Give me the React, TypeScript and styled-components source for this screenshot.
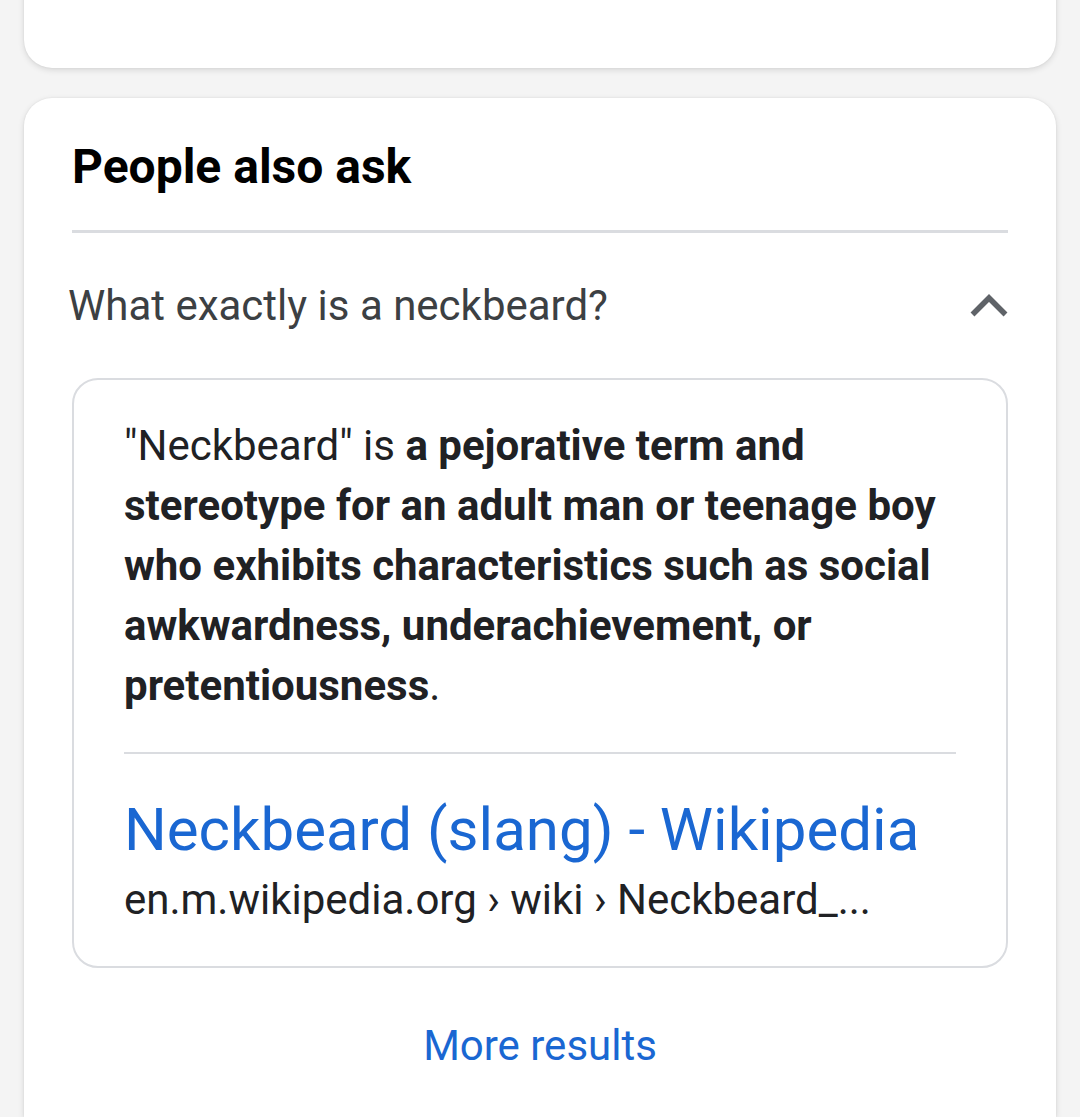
import React from "react";
import styled, { createGlobalStyle } from "styled-components";

const Global = createGlobalStyle`
  html, body { margin: 0; padding: 0; background: #f4f4f4; }
  body { font-family: Roboto, "Noto Sans", Arial, sans-serif; }
  * { box-sizing: border-box; }
`;

const Page = styled.div`
  display: flex;
  flex-direction: column;
  gap: 30px;
  padding: 0 24px;
  height: 1117px;
  overflow: hidden;
`;

const Card = styled.div<{ $top?: boolean }>`
  background: #fff;
  border-radius: 28px;
  box-shadow: 0 2px 6px rgba(0, 0, 0, 0.12), 0 0 2px rgba(0, 0, 0, 0.08);
  ${(p) =>
    p.$top
      ? `height: 96px; margin-top: -28px; border-top-left-radius: 0; border-top-right-radius: 0;`
      : `flex: 1; padding: 0 48px; border-bottom-left-radius: 0; border-bottom-right-radius: 0;`}
`;

const Heading = styled.h2`
  margin: 0;
  padding: 38px 0 32px;
  font-size: 48px;
  font-weight: 700;
  color: #000;
  line-height: 62px;
  border-bottom: 3px solid #dadce0;
`;

const QuestionRow = styled.div`
  display: flex;
  align-items: center;
  justify-content: space-between;
  height: 145px;
  margin-left: -4px;
`;

const Question = styled.span`
  font-size: 42px;
  color: #3c4043;
`;

const Chevron = styled.svg`
  width: 38px;
  height: 26px;
  margin-top: -2px;
`;

const Answer = styled.div`
  border: 2px solid #dadce0;
  border-radius: 26px;
  padding: 36px 50px 41px;
`;

const Snippet = styled.p`
  margin: 0;
  font-size: 42px;
  line-height: 60px;
  color: #202124;
  padding-bottom: 36px;
  border-bottom: 2px solid #dadce0;
  white-space: nowrap;
`;

const Strong = styled.b`
  font-weight: 700;
`;

const Link = styled.a`
  display: block;
  margin-top: 41px;
  font-size: 60px;
  line-height: 70px;
  color: #1a67d2;
  text-decoration: none;
`;

const Cite = styled.div`
  margin-top: 10px;
  font-size: 42px;
  line-height: 50px;
  color: #202124;
`;

const More = styled.div`
  text-align: center;
  font-size: 42px;
  line-height: 50px;
  color: #1a67d2;
  padding-top: 53px;
`;

export default function App() {
  return (
    <>
      <Global />
      <Page>
        <Card $top />
        <Card>
          <Heading>People also ask</Heading>
          <QuestionRow>
            <Question>What exactly is a neckbeard?</Question>
            <Chevron viewBox="0 0 38 26">
              <path d="M2.5 22.5 L19 6 L35.5 22.5" fill="none" stroke="#5f6368" strokeWidth="5.5" />
            </Chevron>
          </QuestionRow>
          <Answer>
            <Snippet>
              "Neckbeard" is <Strong>a pejorative term and</Strong>
              <br />
              <Strong>stereotype for an adult man or teenage boy</Strong>
              <br />
              <Strong>who exhibits characteristics such as social</Strong>
              <br />
              <Strong>awkwardness, underachievement, or</Strong>
              <br />
              <Strong>pretentiousness</Strong>.
            </Snippet>
            <Link href="#">Neckbeard (slang) - Wikipedia</Link>
            <Cite>en.m.wikipedia.org › wiki › Neckbeard_...</Cite>
          </Answer>
          <More>More results</More>
        </Card>
      </Page>
    </>
  );
}
